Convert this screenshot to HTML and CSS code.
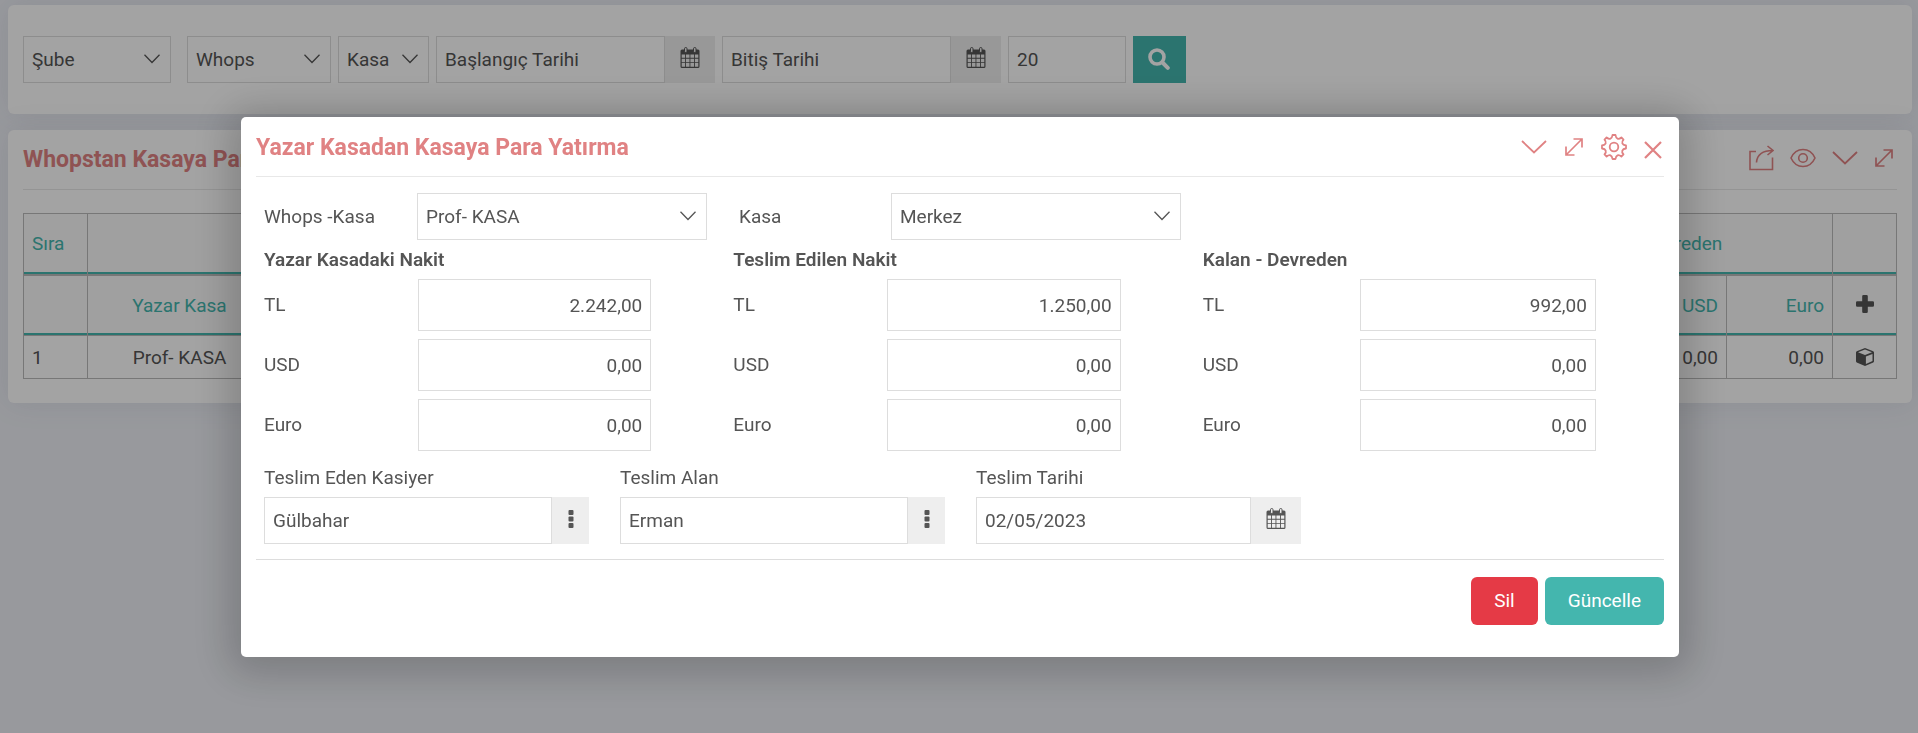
FILE: index.html
```html
<!DOCTYPE html>
<html lang="tr">
<head>
<meta charset="utf-8">
<meta name="viewport" content="width=device-width, initial-scale=1">
<title>Yazar Kasadan Kasaya Para Yatırma</title>
<link rel="stylesheet" href="styles.css">
</head>
<body>
<svg class="sprite" aria-hidden="true">
  <symbol id="i-down" viewBox="0 0 26 14"><path d="M1 1l12 11.500L25 1" fill="none" stroke="currentColor" stroke-width="1.800"/></symbol>
  <symbol id="i-caret" viewBox="0 0 16 10"><path d="M.5 .8L8 8.500 15.500 .8" fill="none" stroke="currentColor" stroke-width="1.300"/></symbol>
  <symbol id="i-expand" viewBox="0 0 20 20"><path d="M9.500 2H18v8.500M18 2L2 18M2 9.500V18h8.500" fill="none" stroke="currentColor" stroke-width="1.700"/></symbol>
  <symbol id="i-close" viewBox="0 0 18 18"><path d="M1 1l16 16M17 1L1 17" fill="none" stroke="currentColor" stroke-width="2.200"/></symbol>
  <symbol id="i-gear" viewBox="-13 -13 26 26"><g fill="none" stroke="currentColor" stroke-width="1.800" stroke-linejoin="round"><circle r="4.300"/><path d="M1.500-12C2-8 4.500-7 7.400-9.500L9.500-7.400C7-4.500 8-2 12-1.500V1.500C8 2 7 4.500 9.500 7.400L7.400 9.500C4.500 7 2 8 1.500 12H-1.500C-2 8-4.500 7-7.400 9.500L-9.500 7.400C-7 4.500-8 2-12 1.500V-1.500C-8-2-7-4.500-9.500-7.400L-7.400-9.500C-4.500-7-2-8-1.500-12z"/></g></symbol>
  <symbol id="i-share" viewBox="0 0 26 26"><path d="M8 6.500H2v18h22.500V12.500M8.500 17.500C9 10.500 14 5.500 25 5.500M19.500 1l5.500 4.500L19.500 10" fill="none" stroke="currentColor" stroke-width="1.600"/></symbol>
  <symbol id="i-eye" viewBox="0 0 26 20"><g fill="none" stroke="currentColor" stroke-width="1.600"><path d="M1 10C3.500 4.500 8 1.500 13 1.500S22.500 4.500 25 10c-2.500 5.500-7 8.500-12 8.500S3.500 15.500 1 10z"/><circle cx="13" cy="10" r="4.300"/></g></symbol>
  <symbol id="i-cal" viewBox="0 0 20 21"><path fill="currentColor" fill-rule="evenodd" d="M2 2.500h16a1.500 1.500 0 0 1 1.500 1.500v15.500a1.500 1.500 0 0 1-1.500 1.500H2A1.500 1.500 0 0 1 .5 19.500V4A1.500 1.500 0 0 1 2 2.500zM1.700 7.500v3.300H5V7.500zm4.200 0v3.300h3.600V7.500zm4.500 0v3.300H14V7.500zm4.500 0v3.300h3.400V7.500zM1.700 11.700v3.500H5v-3.500zm4.200 0v3.500h3.600v-3.500zm4.500 0v3.500H14v-3.500zm4.500 0v3.500h3.400v-3.500zM1.700 16.100v3.700H5v-3.700zm4.200 0v3.700h3.600v-3.700zm4.500 0v3.700H14v-3.700zm4.500 0v3.700h3.400v-3.700z"/><g fill="#eee" stroke="currentColor"><rect x="4.500" y=".5" width="2.500" height="5" rx="1.200"/><rect x="13.500" y=".5" width="2.500" height="5" rx="1.200"/></g></symbol>
  <symbol id="i-search" viewBox="0 0 22 22"><circle cx="9" cy="9" r="7" fill="none" stroke="currentColor" stroke-width="3.600"/><path d="M14.500 14.500l5.300 5.300" stroke="currentColor" stroke-width="4" stroke-linecap="round"/></symbol>
  <symbol id="i-plus" viewBox="0 0 18 18"><path d="M7.500 0h3a1.300 1.300 0 0 1 1.300 1.300v4.900h4.900A1.300 1.300 0 0 1 18 7.500v3a1.300 1.300 0 0 1-1.300 1.300h-4.900v4.900a1.300 1.300 0 0 1-1.300 1.300h-3a1.300 1.300 0 0 1-1.300-1.300v-4.900H1.300A1.300 1.300 0 0 1 0 10.500v-3a1.300 1.300 0 0 1 1.300-1.300h4.900V1.300A1.300 1.300 0 0 1 7.500 0z" fill="currentColor"/></symbol>
  <symbol id="i-cube" viewBox="0 0 18 18"><path fill="currentColor" fill-rule="evenodd" d="M9 0l8.300 3.200.7 1v9.300l-.7 1L9 18 .7 14.500l-.7-1V4.200l.7-1zM9 1.600L2 4.300l7 2.800 7-2.800zM9.900 8.500v7.400l6.600-2.900V5.900z"/></symbol>
  <symbol id="i-dots" viewBox="0 0 6 18"><g fill="currentColor"><rect x=".5" width="5" height="5" rx="1"/><rect x=".5" y="6.500" width="5" height="5" rx="1"/><rect x=".5" y="13" width="5" height="5" rx="1"/></g></symbol>
</svg>

<main class="page">
  <form class="card filters">
    <div class="select filter-branch">
      <select aria-label="Şube"><option>Şube</option></select>
      <svg class="caret"><use href="#i-caret"/></svg>
    </div>
    <div class="select filter-whops">
      <select aria-label="Whops"><option>Whops</option></select>
      <svg class="caret"><use href="#i-caret"/></svg>
    </div>
    <div class="select filter-till">
      <select aria-label="Kasa"><option>Kasa</option></select>
      <svg class="caret"><use href="#i-caret"/></svg>
    </div>
    <div class="group filter-date">
      <input type="text" aria-label="Başlangıç Tarihi" placeholder="Başlangıç Tarihi">
      <button type="button" class="addon" aria-label="Takvim"><svg class="cal"><use href="#i-cal"/></svg></button>
    </div>
    <div class="group filter-date">
      <input type="text" aria-label="Bitiş Tarihi" placeholder="Bitiş Tarihi">
      <button type="button" class="addon" aria-label="Takvim"><svg class="cal"><use href="#i-cal"/></svg></button>
    </div>
    <input class="filter-count" type="text" aria-label="Adet" value="20">
    <button type="submit" class="search" aria-label="Ara"><svg><use href="#i-search"/></svg></button>
  </form>

  <section class="card list">
    <header class="head list-head">
      <h1>Whopstan Kasaya Para Yatırma</h1>
      <div class="tools">
        <button type="button" aria-label="Paylaş"><svg class="s26"><use href="#i-share"/></svg></button>
        <button type="button" aria-label="Göster"><svg class="eye"><use href="#i-eye"/></svg></button>
        <button type="button" aria-label="Daralt"><svg class="down"><use href="#i-down"/></svg></button>
        <button type="button" aria-label="Genişlet"><svg class="s20"><use href="#i-expand"/></svg></button>
      </div>
    </header>
    <table class="grid">
      <colgroup><col class="c-no"><col class="c-name"><col><col class="c-sum"><col class="c-sum"><col class="c-euro"><col class="c-act"></colgroup>
      <thead>
        <tr><th class="l">Sıra</th><th></th><th></th><th colspan="3">Kalan - Devreden</th><th></th></tr>
        <tr><th></th><th>Yazar Kasa</th><th></th><th class="r">TL</th><th class="r">USD</th><th class="r">Euro</th><th><button type="button" class="act" aria-label="Ekle"><svg><use href="#i-plus"/></svg></button></th></tr>
      </thead>
      <tbody>
        <tr><td class="l">1</td><td>Prof- KASA</td><td></td><td class="r">992,00</td><td class="r">0,00</td><td class="r">0,00</td><td><button type="button" class="act" aria-label="Detay"><svg><use href="#i-cube"/></svg></button></td></tr>
      </tbody>
    </table>
  </section>
</main>

<div class="overlay">
  <section class="modal" role="dialog" aria-modal="true" aria-labelledby="dlg-title">
    <header class="head modal-head">
      <h2 id="dlg-title">Yazar Kasadan Kasaya Para Yatırma</h2>
      <div class="tools">
        <button type="button" aria-label="Daralt"><svg class="down"><use href="#i-down"/></svg></button>
        <button type="button" aria-label="Genişlet"><svg class="s20"><use href="#i-expand"/></svg></button>
        <button type="button" aria-label="Ayarlar"><svg class="s26"><use href="#i-gear"/></svg></button>
        <button type="button" class="close" aria-label="Kapat"><svg class="s18"><use href="#i-close"/></svg></button>
      </div>
    </header>

    <form class="body">
      <div class="tills">
        <label for="whops">Whops -Kasa</label>
        <div class="select"><select id="whops"><option>Prof- KASA</option></select><svg class="caret"><use href="#i-caret"/></svg></div>
        <label for="kasa" class="second">Kasa</label>
        <div class="select"><select id="kasa"><option>Merkez</option></select><svg class="caret"><use href="#i-caret"/></svg></div>
      </div>

      <div class="sums">
        <fieldset>
          <legend>Yazar Kasadaki Nakit</legend>
          <div class="sum"><label for="a1">TL</label><input id="a1" type="text" value="2.242,00"></div>
          <div class="sum"><label for="a2">USD</label><input id="a2" type="text" value="0,00"></div>
          <div class="sum"><label for="a3">Euro</label><input id="a3" type="text" value="0,00"></div>
        </fieldset>
        <fieldset>
          <legend>Teslim Edilen Nakit</legend>
          <div class="sum"><label for="b1">TL</label><input id="b1" type="text" value="1.250,00"></div>
          <div class="sum"><label for="b2">USD</label><input id="b2" type="text" value="0,00"></div>
          <div class="sum"><label for="b3">Euro</label><input id="b3" type="text" value="0,00"></div>
        </fieldset>
        <fieldset class="rest">
          <legend>Kalan - Devreden</legend>
          <div class="sum"><label for="c1">TL</label><input id="c1" type="text" value="992,00"></div>
          <div class="sum"><label for="c2">USD</label><input id="c2" type="text" value="0,00"></div>
          <div class="sum"><label for="c3">Euro</label><input id="c3" type="text" value="0,00"></div>
        </fieldset>
      </div>

      <div class="handover">
        <div class="field">
          <label for="giver">Teslim Eden Kasiyer</label>
          <div class="group"><input id="giver" type="text" value="Gülbahar"><button type="button" class="addon narrow" aria-label="Seç"><svg class="dots"><use href="#i-dots"/></svg></button></div>
        </div>
        <div class="field">
          <label for="taker">Teslim Alan</label>
          <div class="group"><input id="taker" type="text" value="Erman"><button type="button" class="addon narrow" aria-label="Seç"><svg class="dots"><use href="#i-dots"/></svg></button></div>
        </div>
        <div class="field">
          <label for="date">Teslim Tarihi</label>
          <div class="group"><input id="date" type="text" value="02/05/2023"><button type="button" class="addon" aria-label="Takvim"><svg class="cal"><use href="#i-cal"/></svg></button></div>
        </div>
      </div>

      <footer class="actions">
        <button type="button" class="btn danger">Sil</button>
        <button type="submit" class="btn primary">Güncelle</button>
      </footer>
    </form>
  </section>
</div>
</body>
</html>
```

FILE: styles.css
```css
* { box-sizing: border-box; }

body {
  margin: 0;
  min-height: 100vh;
  background: #eef0f6;
  color: #555;
  font: 400 19px/24px Roboto, "Noto Sans", sans-serif;
}

.sprite { position: absolute; width: 0; height: 0; }
svg { display: block; }
h1, h2 { margin: 0; font-size: 23px; line-height: 28px; font-weight: 700; }

button, input, select { font: inherit; color: inherit; }
button { border: 0; padding: 0; background: none; cursor: pointer; }

input, select {
  display: block;
  width: 100%;
  min-width: 0;
  height: 47px;
  margin: 0;
  padding: 0 8px;
  border: 1px solid #ddd;
  border-radius: 0;
  background: #fff;
  appearance: none;
}
input::placeholder { color: inherit; opacity: 1; }

.select { position: relative; }
.caret {
  position: absolute;
  top: 18px;
  right: 11px;
  width: 16px;
  height: 10px;
  pointer-events: none;
}

.group { display: flex; }
.group input { flex: 1; }
.addon {
  display: flex;
  flex: none;
  align-items: center;
  justify-content: center;
  width: 50px;
  height: 47px;
  padding-bottom: 4px;
  background: #eee;
}
.narrow { width: 37px; }
.cal { width: 20px; height: 21px; }
.dots { width: 6px; height: 18px; }

.page {
  display: grid;
  gap: 16px;
  padding: 5px 6px 0 8px;
}

.card {
  border-radius: 6px;
  background: #fff;
  box-shadow: 0 0 30px rgba(82, 90, 105, .1);
}

.filters {
  display: flex;
  gap: 7px;
  padding: 31px 15px;
}
.filter-branch { width: 148px; margin-right: 9px; }
.filter-whops { width: 144px; }
.filter-till { width: 91px; }
.filter-date { width: 279px; }
.filter-count { width: 118px; }
.search {
  display: grid;
  place-items: center;
  width: 53px;
  height: 47px;
  padding: 0 2px 2px 0;
  background: #44b6ae;
  color: #fff;
}
.search svg { width: 22px; height: 22px; }

.list { padding: 0 15px 24px; }

.head {
  display: flex;
  align-items: center;
  justify-content: space-between;
  height: 60px;
  border-bottom: 1px solid #e8e8e8;
  color: #e08283;
}
.list-head { margin-bottom: 23px; }
.modal-head h2 { padding-top: 2px; }
.tools { display: flex; align-items: center; gap: 17px; padding-right: 2px; }
.list-head .tools { gap: 16px; padding: 0 3px 3px 0; }
.close { padding-top: 6px; }
.down { width: 26px; height: 14px; }
.s18 { width: 18px; height: 18px; }
.s20 { width: 20px; height: 20px; }
.s26 { width: 26px; height: 26px; }
.eye { width: 26px; height: 20px; }

.grid {
  width: 100%;
  border: solid #bbb;
  border-width: 0 0 1px 1px;
  border-collapse: separate;
  border-spacing: 0;
  table-layout: fixed;
}
.c-no { width: 64px; }
.c-name { width: 184px; }
.c-sum { width: 128px; }
.c-euro { width: 106px; }
.c-act { width: 64px; }
.grid th, .grid td {
  padding: 0 8px;
  border: solid #bbb;
  border-width: 1px 1px 0 0;
  font-weight: 400;
  text-align: center;
}
.grid th {
  height: 61px;
  background: #fafafa;
  color: #44b6ae;
  box-shadow: inset 0 -2px #44b6ae;
}
.grid tr + tr th { border-top-width: 2px; }
.grid td { height: 43px; padding-top: 1px; }
.grid .l { text-align: left; }
.grid .r { text-align: right; }
.act { display: inline-block; color: #555; vertical-align: middle; }
.grid th .act { padding-bottom: 4px; }
.grid td .act { padding-bottom: 2px; }
.act svg { width: 18px; height: 18px; }

.overlay {
  position: fixed;
  inset: 0;
  overflow: auto;
  padding: 117px 0 0 2px;
  background: rgba(0, 0, 0, .36);
}
.modal {
  width: calc(75% + 1px);
  margin: 0 auto;
  padding: 0 15px 32px;
  border-radius: 5px;
  background: #fff;
  box-shadow: 0 5px 40px 12px rgba(0, 0, 0, .2);
}

.body { padding-top: 16px; }

.tills {
  display: grid;
  grid-template-columns: 153fr 290fr 184fr 290fr 483fr;
  align-items: center;
  padding-left: 8px;
}
.second { padding-left: 32px; }

.sums { display: grid; grid-template-columns: repeat(3, 1fr); margin-top: 8px; }
fieldset {
  display: grid;
  gap: 8px;
  min-width: 0;
  margin: 0;
  padding: 0 0 0 8px;
  border: 0;
}
legend { margin-bottom: 7px; padding: 0; font-weight: 600; }
.sum { display: grid; grid-template-columns: 154fr 233fr 74fr; align-items: center; }
.rest .sum { grid-template-columns: 157fr 236fr 68fr; }
.sum input { height: 52px; text-align: right; }

.handover {
  display: grid;
  grid-template-columns: 325fr 325fr 325fr 332fr;
  gap: 31px;
  margin-top: 15px;
  padding: 0 0 15px 8px;
}
.field label { display: block; margin-bottom: 7px; }

.actions {
  display: flex;
  justify-content: flex-end;
  gap: 7px;
  padding-top: 17px;
  border-top: 1px solid #ddd;
}
.btn {
  height: 48px;
  padding: 0 23px;
  border-radius: 6px;
  color: #fff;
}
.danger { background: #e53a46; }
.primary { background: #44b6ae; }
```
